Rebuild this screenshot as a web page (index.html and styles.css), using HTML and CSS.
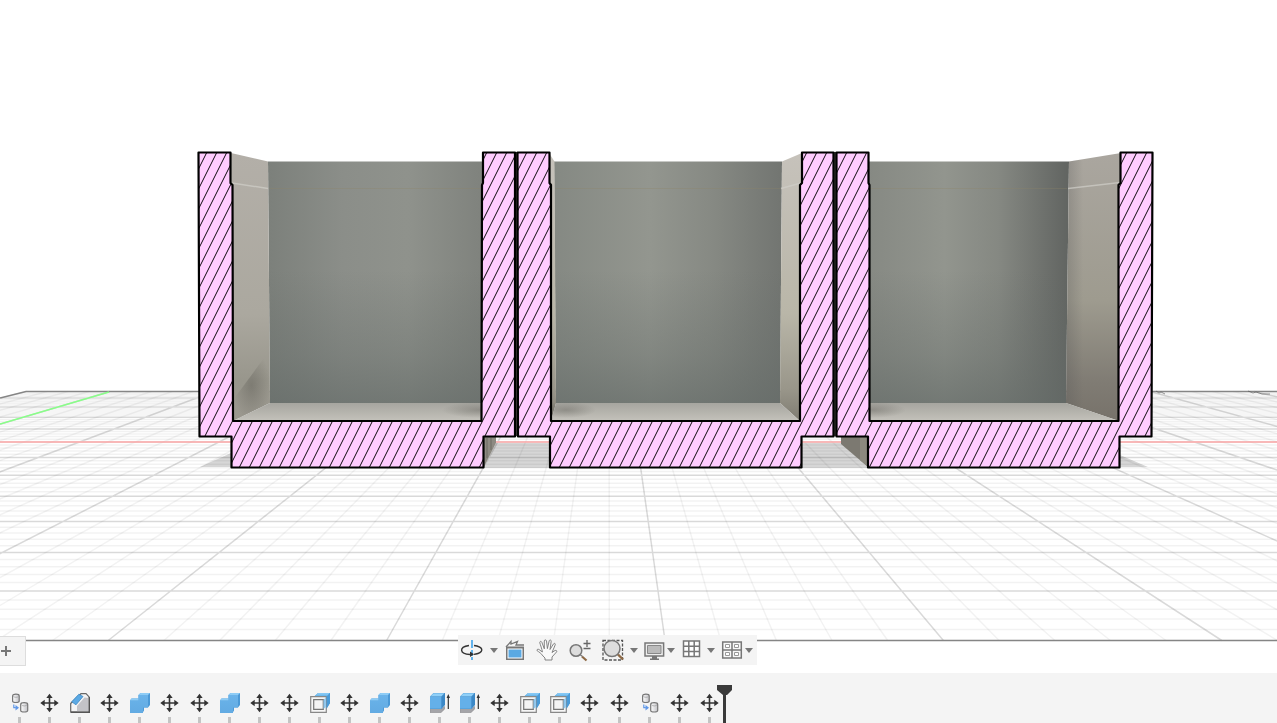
FILE: index.html
```html
<!DOCTYPE html>
<html lang="en">
<head>
<meta charset="utf-8">
<title>Section view</title>
<link rel="stylesheet" href="styles.css">
</head>
<body>
<svg class="defs" width="0" height="0" aria-hidden="true">
  <defs>
    <linearGradient id="blueFront" x1="0" y1="0" x2="0" y2="1"><stop offset="0" stop-color="#6ab3ea"/><stop offset="1" stop-color="#62aae2"/></linearGradient>
    <linearGradient id="can" x1="0" x2="1"><stop offset="0" stop-color="#fff"/><stop offset="1" stop-color="#c4c4c8"/></linearGradient>
  </defs>
  <symbol id="i-move" viewBox="0 0 20 20">
    <path d="M9.500 3v14M2.500 10h14" stroke="#333" stroke-width="1.600" fill="none"/>
    <path d="M9.500 .7l3.200 4.300H6.300zM9.500 19.300l3.200-4.300H6.300zM.3 10l4.400-3.200v6.400zM18.700 10l-4.400-3.200v6.400z" fill="#333"/>
  </symbol>
  <symbol id="i-copy" viewBox="0 0 20 20">
    <g stroke="#777" stroke-width="1.200" fill="url(#can)">
      <path d="M2.600 3v5c0 2 6.600 2 6.600 0V3c0-2.400-6.600-2.400-6.600 0z"/>
      <path d="M10.700 11.500v6c0 2 7 2 7 0v-6c0-2.400-7-2.400-7 0z"/>
    </g>
    <path d="M3.300 3.200c1 1.500 4.600 1.500 5.200 0M11.500 11.800c1 1.500 4.600 1.500 5.500 0" stroke="#999" stroke-width=".7" fill="none"/>
    <path d="M3.800 11.500v3.200h2" stroke="#6098e8" stroke-width="1.200" fill="none"/><path d="M5.500 12l3.500 2.700-3.500 2.700z" fill="#6098e8"/>
  </symbol>
  <symbol id="i-chamfer" viewBox="0 0 20 20">
    <path d="M.7 10.500L11 .7h5l3.300 3.500v15H.7z" fill="#f4f4f4" stroke="#666" stroke-width="1.200"/>
    <path d="M7 18.500V13l7.500-8.500 4.200.5v13.500z" fill="#c3c3c7"/>
    <path d="M19.300 4v15.200H1" fill="none" stroke="#555" stroke-width="1.400"/>
    <path d="M1.700 8.800L8.800 1.300l4.200 2.200-7 8.300z" fill="#5ba9e4" stroke="#3c86c2" stroke-width=".8"/>
  </symbol>
  <symbol id="i-combine" viewBox="0 0 20 20">
    <path d="M0 7.500L1.500 5.500h7V2l2-2H20v12l-2 2.500h-4V17.500L12.500 20H0z" fill="#4b99d6"/>
    <path d="M0 7.500h8.500V2H18v12.500h-5V20H0z" fill="url(#blueFront)"/>
    <path d="M8.500 2l2-2H20l-2 2zM0 7.500l1.500-2h7v2z" fill="#8dccf6"/>
  </symbol>
  <symbol id="i-shell" viewBox="0 0 20 20">
    <path d="M4 4L8 0h12v10l-4 6z" fill="#3f8fce"/>
    <path d="M5 3.500L8 0h12l-3 3.500z" fill="#85c8f5"/>
    <path d="M3.500 4L6 1.800h12L15.500 4z" fill="#6db8ec"/>
    <path d="M.7 3.700h15.600v15.600H.7z" fill="#f6f6f6" stroke="#888" stroke-width="1.200"/>
    <path d="M3.700 6.700h9.600v9.600H3.700z" fill="#f4f4f4" stroke="#777" stroke-width="1.200"/>
    <path d="M13.500 7l2.300-2.500v9.500l-2.300 2z" fill="#8cc6ee"/>
    <path d="M16.500 3.500L20 0v10l-3.500 6z" fill="#4a9bd8"/>
  </symbol>
  <symbol id="i-extrude" viewBox="0 0 20 20">
    <path d="M0 16.500h11l3.500-3v2.700L11 19.500H0z" fill="#a4a4a8" stroke="#88888c" stroke-width=".6"/>
    <path d="M0 3.500L3.500 0H15v12l-3.500 4H0z" fill="#3c88c6"/>
    <path d="M0 4h11.300v11.700H0z" fill="#64b0e9"/><path d="M.3 3.500L3.500.3h11L11.300 3.500z" fill="#90d0f8"/>
    <path d="M18.300 16V3.500" stroke="#333" stroke-width="1.200"/><path d="M18.300 1l1.700 4h-3.400z" fill="#333"/>
  </symbol>
</svg>
<div class="app">
  <main class="viewport">
    <svg class="scene" viewBox="0 0 1277 673" preserveAspectRatio="xMidYMid slice" role="img" aria-label="Cross-section of three trays">
      <defs>
        <pattern id="hatch" width="10" height="20" patternUnits="userSpaceOnUse" patternTransform="translate(3 0)">
          <rect width="10" height="20" fill="#fcf"/>
          <path d="M-1 22L11-2M-1 2L1-2M9 22l2-4" stroke="#000" stroke-width=".95"/>
        </pattern>
        <linearGradient id="back1"><stop offset="0" stop-color="#7c807b"/><stop offset=".35" stop-color="#8b8e89"/><stop offset=".65" stop-color="#8f928c"/><stop offset="1" stop-color="#7f827d"/></linearGradient>
        <linearGradient id="back2"><stop offset="0" stop-color="#858983"/><stop offset=".42" stop-color="#93968f"/><stop offset=".7" stop-color="#868983"/><stop offset="1" stop-color="#727571"/></linearGradient>
        <linearGradient id="back3"><stop offset="0" stop-color="#868983"/><stop offset=".38" stop-color="#92958e"/><stop offset=".65" stop-color="#858882"/><stop offset="1" stop-color="#616461"/></linearGradient>
        <linearGradient id="shade" x1="0" y1="0" x2="0" y2="1"><stop offset=".45" stop-color="#636a67" stop-opacity="0"/><stop offset=".8" stop-color="#636a67" stop-opacity=".35"/><stop offset="1" stop-color="#636a67" stop-opacity=".65"/></linearGradient>
        <linearGradient id="wallL" x1="0" y1="0" x2="0" y2="1"><stop offset="0" stop-color="#b3afa8"/><stop offset=".6" stop-color="#aba89f"/><stop offset=".85" stop-color="#98968c"/><stop offset="1" stop-color="#9b988f"/></linearGradient>
        <linearGradient id="wallM" x1="0" y1="0" x2="0" y2="1"><stop offset="0" stop-color="#c6c2bb"/><stop offset=".6" stop-color="#b9b6a8"/><stop offset=".88" stop-color="#99968a"/><stop offset="1" stop-color="#7f7c72"/></linearGradient>
        <linearGradient id="wallR" x1="0" y1="0" x2="0" y2="1"><stop offset="0" stop-color="#aaa69f"/><stop offset=".55" stop-color="#9e9b8f"/><stop offset=".85" stop-color="#807c74"/><stop offset="1" stop-color="#77726a"/></linearGradient>
        <linearGradient id="floor" x1="0" y1="0" x2="0" y2="1"><stop offset="0" stop-color="#a6a59f"/><stop offset="1" stop-color="#c4c2bb"/></linearGradient>
        <linearGradient id="edge"><stop offset="0" stop-color="#555" stop-opacity=".3"/><stop offset="1" stop-color="#555" stop-opacity="0"/></linearGradient>
        <radialGradient id="corner"><stop offset="0" stop-color="#4d4b45" stop-opacity=".35"/><stop offset="1" stop-color="#4d4b45" stop-opacity="0"/></radialGradient>
      </defs>

      <path id="grid-minor-x" class="minor"/>
      <path id="grid-minor-z" class="minor"/>
      <path id="grid-major" class="major"/>
      <path class="border" d="M0 398L26 391.500H1277"/>
      <path class="border" d="M0 640.500H1277"/>
      <path d="M1156 391l3 2 2-1 4 2M1248 391l5 2 3-1 6 2h8" class="marks"/>
      <path class="axis-green" d="M0 424L109 392"/>
      <path class="axis-red" d="M0 442H1277"/>
      <path class="shadow" d="M231 453L200 467h31zM496 443h54v25h-66zM802 443h40l27 25h-67zM1120 455l28 12h-28z"/>

      <path d="M484 437h12v6l-12 24z" fill="#8d8a82"/>
      <path d="M487 438v20M491 438v12" stroke="#6d6a63" stroke-width="1"/>
      <path d="M841 437h27v30l-27-23z" fill="#7c7971"/>
      <path d="M860 437h8v30l-8-7z" fill="#8c897e"/>

      <g>
        <path d="M268 161.500H483V403H270z" fill="url(#back1)"/>
        <path d="M268 161.500H483V403H270z" fill="url(#shade)"/>
        <path d="M231 153l37 8.500L270 403l-37 18z" fill="url(#wallL)"/>
        <path d="M270 350V403l-37 18V400z" fill="url(#corner)"/>
        <path d="M270 403H482v18H233z" fill="url(#floor)"/>
        <ellipse cx="480" cy="410" rx="38" ry="8" fill="url(#corner)"/>
        <path d="M232 183l36 5.500" class="lip"/>
        <path d="M269 188.500H482" class="seam"/>
      </g>
      <g>
        <path d="M554 161.500H782L780 403H556z" fill="url(#back2)"/>
        <path d="M554 161.500H782L780 403H556z" fill="url(#shade)"/>
        <path d="M549 153l5.500 8.500L556 403l-5 18z" fill="url(#wallM)"/>
        <path d="M782 161.500l20-8.500-2 268-20-18z" fill="url(#wallM)"/>
        <path d="M556 403H780l20 18H551z" fill="url(#floor)"/>
        <ellipse cx="566" cy="410" rx="30" ry="8" fill="url(#corner)"/>
        <path d="M781 188.500l20-5.500" class="lip"/>
        <path d="M555 188.500H781" class="seam"/>
      </g>
      <g>
        <path d="M868 161.500H1069L1066 403H868z" fill="url(#back3)"/>
        <path d="M868 161.500H1069L1066 403H868z" fill="url(#shade)"/>
        <path d="M1069 161.500l52-8.500-2 268-53-18z" fill="url(#wallR)"/>
        <path d="M1069 161.500l14-2.300V408l-17-5z" fill="url(#edge)"/>
        <path d="M869 403h197l53 18H869z" fill="url(#floor)"/>
        <ellipse cx="872" cy="410" rx="34" ry="8" fill="url(#corner)"/>
        <path d="M1068 188.500l52-6" class="lip"/>
        <path d="M869 188.500H1067" class="seam"/>
      </g>

      <path d="M516.500 152V436M835 152V436" stroke="#45443e" stroke-width="2"/>
      <g class="section">
        <path d="M198.500 152.500h32V183l2 2 .5 236H481.500L482 185l1-2V152.500h32v284H483.500v31h-252v-31h-32z"/>
        <path d="M517.500 152.500h32V183l1.500 2v236H800V185l2-2V152.500h31.500v284h-32v31H550v-31h-32z"/>
        <path d="M836.500 152.500h32V183l1 2v236h249V185l2-2V152.500h32l-1 284h-32v31H868v-31h-31.500z"/>
      </g>
    </svg>

    <button class="add-tab" type="button" aria-label="Add tab"><svg width="12" height="12" viewBox="0 0 12 12"><path d="M6 1v10M1 6h10" stroke="#777" stroke-width="2"/></svg></button>

    <nav class="navbar" aria-label="Navigation">
      <button type="button" aria-label="Orbit"><svg width="24" height="24" viewBox="0 0 24 24"><path d="M12 2v20" stroke="#47a7ec" stroke-width="1.700" stroke-dasharray="8 2 6 1"/><path d="M9 7.500C-1.500 9-.5 16 10 16.500M14 7.500c9 1 10 6 4 8-1.500.5-3 .8-4 .9" fill="none" stroke="#333" stroke-width="1.400"/><path d="M10 13.500v5.500l4-2.700z" fill="#333"/></svg></button>
      <button class="drop" type="button" aria-label="Orbit options"></button>
      <button type="button" aria-label="Look at"><svg width="24" height="24" viewBox="0 0 24 24"><path d="M3 9L8 3.500v2.500L14.500 3.500 13 7h8" fill="none" stroke="#777" stroke-width="1.300"/><path d="M3 8.500h18V22H3z" fill="#777"/><path d="M4.500 10.500h15v10h-15z" fill="#fff"/><path d="M5.500 11.500h13v8h-13z" fill="#5ba9e2"/></svg></button>
      <button class="hand" type="button" aria-label="Pan"><svg width="24" height="24" viewBox="0 0 24 24"><path d="M8 18C6.500 15.500 3.800 13.800 2.200 12.800c-.8-1 .4-2 1.600-1.400L7.400 14C7 11 5.400 7 4.800 4.800c-.3-1.500 1.400-2 2-.6l2.500 6.600L9.300 3c0-1.500 2-1.500 2.200 0l.9 7.600 1.800-7.800c.4-1.300 2.200-1 2 .5L15 11.500l3.500-5.600c.8-1.200 2.300-.3 1.700 1L17 14.500l3-2c1.300-.6 2.300.6 1.500 1.500L17 19v3H10v-2z" fill="#fafafa" stroke="#777" stroke-width=".9"/></svg></button>
      <button class="zoom" type="button" aria-label="Zoom"><svg width="24" height="24" viewBox="0 0 24 24"><circle cx="8" cy="12.500" r="5.800" fill="#ddd" stroke="#777" stroke-width="1.500"/><path d="M14 18.500l4.500 4" stroke="#8c6844" stroke-width="2.200"/><path d="M12 16.500l2.500 2" stroke="#777" stroke-width="1.200"/><path d="M19 2v7M15.500 5.500h7M15.500 10.500h7" stroke="#666" stroke-width="1.300"/></svg></button>
      <button class="fit" type="button" aria-label="Fit"><svg width="24" height="24" viewBox="0 0 24 24"><path d="M2 2.500h19.500v19.500H2z" fill="none" stroke="#555" stroke-width="1.300" stroke-dasharray="3 1.500"/><circle cx="11" cy="10.500" r="8" fill="#ddd" stroke="#777" stroke-width="1.500"/><path d="M17 16.500l5 5" stroke="#8c6844" stroke-width="2.400"/></svg></button>
      <button class="drop near" type="button" aria-label="Zoom options"></button>
      <button type="button" aria-label="Display settings"><svg width="24" height="24" viewBox="0 0 24 24"><path d="M3 5h18.600v13H3z" fill="#eee" stroke="#777" stroke-width="1.500"/><path d="M5.500 7.500h13.500v8H5.500z" fill="#bbb" stroke="#888"/><path d="M10 18h5v2.500h2V22h-9v-1.500h2z" fill="#777"/></svg></button>
      <button class="drop tight" type="button" aria-label="Display options"></button>
      <button class="grid-icon" type="button" aria-label="Grid settings"><svg width="24" height="24" viewBox="0 0 24 24"><path d="M3.500 3H19.500v15.500h-16zM8.800 3v15.500M14.200 3v15.500M3.500 8.200h16M3.500 13.400h16" fill="#fff" stroke="#777" stroke-width="1.500"/></svg></button>
      <button class="drop close" type="button" aria-label="Grid options"></button>
      <button class="views" type="button" aria-label="Viewports"><svg width="24" height="24" viewBox="0 0 24 24"><path d="M2.700 4h18.600v16H2.700zM12 4v16M2.700 12h18.600" fill="#f8f8f8" stroke="#777" stroke-width="1.500"/><path d="M5.500 6.500h4v3h-4zM14.500 6.500h4v3h-4zM5.500 14.500h4v3h-4zM14.500 14.500h4v3h-4z" fill="#fff" stroke="#999"/></svg></button>
      <button class="drop tight" type="button" aria-label="Viewport options"></button>
    </nav>
  </main>

  <footer class="timeline" aria-label="Timeline">
    <button type="button" aria-label="Copy"><svg><use href="#i-copy"/></svg></button>
    <button type="button" aria-label="Move"><svg><use href="#i-move"/></svg></button>
    <button type="button" aria-label="Chamfer"><svg><use href="#i-chamfer"/></svg></button>
    <button type="button" aria-label="Move"><svg><use href="#i-move"/></svg></button>
    <button type="button" aria-label="Combine"><svg><use href="#i-combine"/></svg></button>
    <button type="button" aria-label="Move"><svg><use href="#i-move"/></svg></button>
    <button type="button" aria-label="Move"><svg><use href="#i-move"/></svg></button>
    <button type="button" aria-label="Combine"><svg><use href="#i-combine"/></svg></button>
    <button type="button" aria-label="Move"><svg><use href="#i-move"/></svg></button>
    <button type="button" aria-label="Move"><svg><use href="#i-move"/></svg></button>
    <button type="button" aria-label="Shell"><svg><use href="#i-shell"/></svg></button>
    <button type="button" aria-label="Move"><svg><use href="#i-move"/></svg></button>
    <button type="button" aria-label="Combine"><svg><use href="#i-combine"/></svg></button>
    <button type="button" aria-label="Move"><svg><use href="#i-move"/></svg></button>
    <button type="button" aria-label="Extrude"><svg><use href="#i-extrude"/></svg></button>
    <button type="button" aria-label="Extrude"><svg><use href="#i-extrude"/></svg></button>
    <button type="button" aria-label="Move"><svg><use href="#i-move"/></svg></button>
    <button type="button" aria-label="Shell"><svg><use href="#i-shell"/></svg></button>
    <button type="button" aria-label="Shell"><svg><use href="#i-shell"/></svg></button>
    <button type="button" aria-label="Move"><svg><use href="#i-move"/></svg></button>
    <button type="button" aria-label="Move"><svg><use href="#i-move"/></svg></button>
    <button type="button" aria-label="Copy"><svg><use href="#i-copy"/></svg></button>
    <button type="button" aria-label="Move"><svg><use href="#i-move"/></svg></button>
    <span class="last">
      <button type="button" aria-label="Move"><svg><use href="#i-move"/></svg></button>
      <svg class="playhead" viewBox="0 0 16 38" aria-hidden="true"><path d="M0 0h15v5l-5 5H9v28H6V10L0 5z" fill="#3a3a3a"/></svg>
    </span>
  </footer>
</div>
<script src="grid.js"></script>
</body>
</html>
```
FILE: styles.css
```css
* { box-sizing: border-box; }
body { margin: 0; background: #fff; font-family: "Open Sans", sans-serif; }
button { margin: 0; padding: 0; border: 0; background: none; }
.defs { position: absolute; }
.app { display: flex; flex-direction: column; height: 100vh; overflow: hidden; }

.viewport { position: relative; flex: 1; min-height: 0; overflow: hidden; }
.scene { display: block; width: 100%; height: 100%; }
.minor { fill: none; stroke: #000; stroke-opacity: .05; stroke-width: 1.5; }
.major { fill: none; stroke: #000; stroke-opacity: .15; stroke-width: 1.5; }
.border { fill: none; stroke: #858585; stroke-width: 1.3; }
.marks { fill: none; stroke: #555; stroke-width: 1; stroke-opacity: .6; }
.axis-green { stroke: #8f8; stroke-width: 1.5; }
.axis-red { stroke: #ffaaaa; stroke-width: 1.5; }
.shadow { fill: #000; fill-opacity: .16; }
.lip { fill: none; stroke: #d0cec9; stroke-opacity: .7; stroke-width: 1.5; }
.seam { stroke: #8f8468; stroke-opacity: .3; stroke-width: 1; }
.section path { fill: url(#hatch); stroke: #000; stroke-width: 2.2; stroke-linejoin: round; }

.add-tab {
  position: absolute; left: 0; bottom: 7px;
  display: flex; align-items: center;
  width: 26px; height: 30px;
  background: #f4f4f4; border: solid #ddd; border-width: 1px 1px 1px 0;
}

.navbar {
  position: absolute; left: 458px; bottom: 8px;
  display: flex; align-items: center;
  height: 30px; padding: 0 3px 0 2px;
  background: #f4f4f4;
}
.navbar button { display: flex; width: 24px; height: 24px; }
.navbar .drop { width: 19px; align-items: center; justify-content: center; }
.navbar .drop::after { content: ""; border: solid transparent; border-width: 5px 4px 0; border-top-color: #777; }
.navbar .near { width: 17px; }
.navbar .close { width: 14px; }
.navbar .tight { width: 10px; }
.navbar .hand { margin-left: 8px; }
.navbar .zoom, .navbar .fit { margin-left: 9px; }
.navbar .grid-icon { margin-left: 4px; }
.navbar .views { margin-left: 2px; }

.timeline { display: flex; height: 50px; padding: 0 5px; background: #f4f4f4; }
.timeline button {
  display: flex; flex: none; flex-direction: column; align-items: center; gap: 4px;
  width: 30px; height: 50px; padding-top: 20px;
}
.timeline button svg { width: 20px; height: 20px; flex: none; }
.timeline button::after { content: ""; width: 3px; height: 6px; margin-right: 1px; background: #c4c4c4; }
.last { position: relative; display: block; }
.timeline .playhead { position: absolute; right: -8px; bottom: 0; width: 16px; height: 38px; }
```
FILE: grid.js
```javascript
// Ground plane in one-point perspective.
const vanish = { x: 609, y: 243 };
const front = 640.5;
const back = 391.5;
const cell = 55.68;
const axisX = 665;
const invFront = 1 / (front - vanish.y);
const invStep = 0.0000716;

let minorX = '';
let minorZ = '';
let major = '';

for (let i = -29; i <= 30; i++) {
  const x = axisX + i * cell;
  const xBack = vanish.x + (x - vanish.x) * (back - vanish.y) / (front - vanish.y);
  const d = `M${x.toFixed(1)} ${front}L${xBack.toFixed(1)} ${back}`;
  if (i % 5 === 0) major += d; else minorX += d;
}

for (let j = 1; j < 59; j++) {
  const y = vanish.y + 1 / (invFront + j * invStep);
  const left = Math.max(0, vanish.x - (y - vanish.y) * 3.926);
  const d = `M${left.toFixed(1)} ${y.toFixed(1)}H1277`;
  if (j % 5 === 0) major += d; else minorZ += d;
}

document.getElementById('grid-minor-x').setAttribute('d', minorX);
document.getElementById('grid-minor-z').setAttribute('d', minorZ);
document.getElementById('grid-major').setAttribute('d', major);
```
